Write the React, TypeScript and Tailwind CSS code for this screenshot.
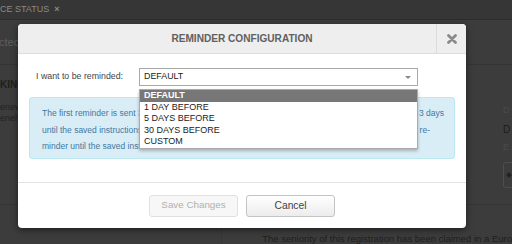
export default function App() {
  const options = ["DEFAULT", "1 DAY BEFORE", "5 DAYS BEFORE", "30 DAYS BEFORE", "CUSTOM"];

  return (
    <div className="relative w-[512px] h-[244px] overflow-hidden bg-[#3c3c3c] font-['Liberation_Sans',Arial,sans-serif]">
      {/* page behind the backdrop */}
      <div className="h-[20px] bg-[#363636] border-b border-[#2e2e2e] flex items-center text-[9px] text-[#8a8a8a]">
        <span>CE STATUS</span>
        <span className="ml-[5px] font-bold">×</span>
      </div>
      <div className="h-[45px] border-b border-[#343434] flex items-center">
        <span className="text-[11px] text-[#5e5e5e] -ml-[1px]">cted</span>
      </div>
      <div className="h-[140px] flex border-b border-[#343434]">
        <div className="w-[18px] overflow-hidden flex flex-col">
          <span className="mt-[12px] text-[10px] font-bold text-[#1e1e1e] whitespace-nowrap">KING</span>
          <span className="mt-[10px] text-[9px] leading-[11px] text-[#222] whitespace-nowrap">enew</span>
          <span className="text-[9px] leading-[11px] text-[#222] whitespace-nowrap">enel</span>
        </div>
        <div className="flex-1" />
        <div className="w-[9px] overflow-hidden flex flex-col text-[9px] whitespace-nowrap">
          <span className="mt-[39px] text-[#4a4a4a]">D</span>
          <span className="mt-[4px] text-[10px] text-[#1c1c1c]">D</span>
          <span className="mt-[4px] text-[#4a4a4a]">E</span>
          <div className="mt-[8px] w-[20px] h-[26px] border border-[#4e4e4e] rounded-[3px] flex items-center pl-[3px]">
            <span className="w-[4px] h-[4px] bg-[#222] rotate-45" />
          </div>
        </div>
      </div>
      <div className="flex h-[39px]">
        <div className="w-[238px] border-r border-[#363636]" />
        <div className="flex-1 flex flex-col">
          <div className="ml-[12px] mt-[24px] w-[15px] h-[2px] bg-[#5a4a1c]" />
          <span className="ml-[40px] mt-[3px] text-[9.5px] text-[#1e1e1e] whitespace-nowrap">
            The seniority of this registration has been claimed in a Euro
          </span>
        </div>
      </div>

      {/* modal */}
      <div className="absolute left-[18px] top-[24px] w-[448px] h-[204px] bg-white rounded-[4px] shadow-[0_2px_6px_rgba(0,0,0,0.5)] flex flex-col overflow-hidden">
        <div className="h-[30px] flex bg-[#eeeeee] border-b border-[#dddddd]">
          <div className="flex-1 pl-[30px] flex items-center justify-center text-[10.1px] font-bold text-[#606060]">
            REMINDER CONFIGURATION
          </div>
          <div className="w-[30px] border-l border-[#dcdcdc] flex items-center justify-center">
            <svg width="10" height="10" viewBox="0 0 10 10">
              <path d="M1.5 1.5 L8.5 8.5 M8.5 1.5 L1.5 8.5" stroke="#8a8a8a" strokeWidth="2.8" strokeLinecap="round" />
            </svg>
          </div>
        </div>

        <div className="flex-1 relative px-[11px] pt-[14px]">
          <div className="flex items-center h-[18px]">
            <div className="w-[110px] pl-[7px] text-[8.8px] text-[#444]">I want to be reminded:</div>
            <div className="w-[279px] h-[18px] border border-[#a9a9a9] pl-[4px] pr-[6px] flex items-center justify-between text-[8.9px] text-[#222]">
              <span>DEFAULT</span>
              <span className="w-0 h-0 border-l-[3px] border-r-[3px] border-t-[3px] border-l-transparent border-r-transparent border-t-[#888]" />
            </div>
          </div>

          <div className="mt-[11px] w-[426px] h-[62px] bg-[#d9edf7] border border-[#bce8f1] rounded-[3px] pl-[12px] pr-[10px] pt-[7px] text-[8.5px] leading-[16.5px] text-[#4378a0]">
            <div className="whitespace-nowrap overflow-hidden flex justify-between">
              <span>The first reminder is sent 30 days before the deadline, the second one</span>
              <span>3 days</span>
            </div>
            <div className="whitespace-nowrap overflow-hidden flex justify-between">
              <span>until the saved instructions are processed. You will keep getting this</span>
              <span className="mr-[14px]">re-</span>
            </div>
            <div className="whitespace-nowrap overflow-hidden">minder until the saved instructions have been confirmed.</div>
          </div>

          <div className="absolute left-[121px] top-[35px] w-[279px] bg-white border border-[#aaaaaa] shadow-[0_2px_3px_rgba(0,0,0,0.25)] text-[9px]">
            {options.map((o, i) => (
              <div
                key={o}
                className={
                  i === 0
                    ? "h-[11.5px] leading-[11.5px] px-[4px] bg-[#777777] text-white font-bold"
                    : "h-[11.5px] leading-[11.5px] px-[4px] text-[#222]"
                }
              >
                {o}
              </div>
            ))}
          </div>
        </div>

        <div className="h-[46px] border-t border-[#e3e3e3] flex items-center justify-center gap-[8px]">
          <button className="w-[89px] h-[22px] rounded-[3px] border border-[#e0e0e0] bg-[#f7f7f7] text-[9.8px] text-[#b0b0b0]">
            Save Changes
          </button>
          <button className="w-[89px] h-[22px] rounded-[3px] border border-[#c4c4c4] bg-gradient-to-b from-white to-[#ececec] text-[10.3px] text-[#444]">
            Cancel
          </button>
        </div>
      </div>
    </div>
  );
}
